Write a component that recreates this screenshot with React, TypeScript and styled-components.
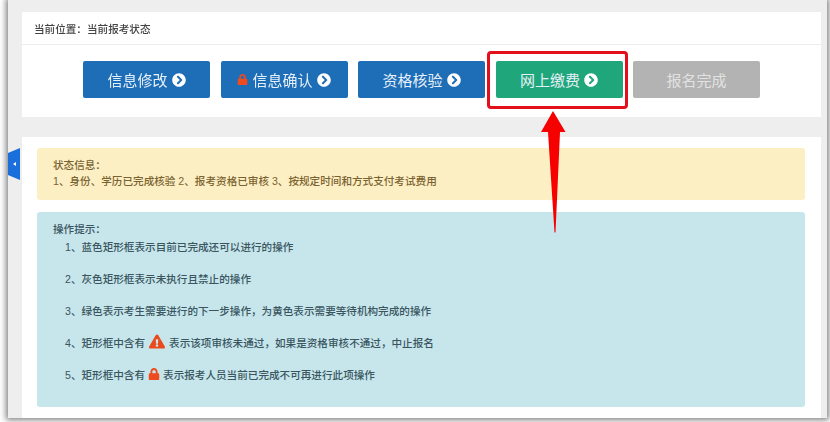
import React from "react";
import styled, { createGlobalStyle } from "styled-components";
import { FaChevronCircleRight, FaExclamationTriangle, FaLock } from "react-icons/fa";

const Global = createGlobalStyle`
  html, body { margin: 0; padding: 0; background: #fff; }
  body { width: 830px; height: 422px; overflow: hidden; font-family: "Liberation Sans", "Noto Sans CJK SC", sans-serif; }
`;

const Desktop = styled.div`
  width: 830px;
  height: 422px;
  overflow: hidden;
  background: #fff;
`;

const Frame = styled.div`
  position: relative;
  box-sizing: border-box;
  width: 819px;
  height: 418px;
  margin-left: 8px;
  padding: 12px 6px 0 14px;
  background: #eeeeee;
  box-shadow: 0 0 6px 2px rgba(0, 0, 0, 0.5);
  filter: blur(0.3px);
`;

const Panel = styled.section`
  background: #fff;
  width: 799px;
`;

const Crumb = styled.div`
  box-sizing: border-box;
  height: 33px;
  padding-left: 12px;
  display: flex;
  align-items: center;
  font-size: 10.6px;
  font-weight: 500;
  color: #444;
  border-bottom: 1px solid #eee;
`;

const Steps = styled.div`
  display: flex;
  gap: 10.5px;
  padding: 16px 0 19px 61px;
`;

const StepButton = styled.div<{ $tone: "blue" | "green" | "gray" }>`
  width: 127px;
  height: 37px;
  border-radius: 2px;
  display: flex;
  align-items: center;
  justify-content: center;
  gap: 4px;
  font-size: 15px;
  color: ${(p) => (p.$tone === "gray" ? "#e2e2e2" : "#e6f0f8")};
  background: ${(p) => (p.$tone === "blue" ? "#1e6db7" : p.$tone === "green" ? "#1fa67b" : "#b3b3b3")};
  svg { color: #fff; }
`;

const LockMark = styled(FaLock)<{ $size: number; $lift: number; $tuck: number }>`
  && { color: #ee4b1f; }
  width: ${(p) => p.$size}px;
  height: ${(p) => p.$size}px;
  margin: ${(p) => -p.$lift}px ${(p) => -p.$tuck}px 0 ${(p) => -p.$tuck}px;
  flex: none;
`;

const MainPanel = styled(Panel)`
  box-sizing: border-box;
  margin-top: 20px;
  height: 281px;
  padding: 11px 16px 11px 15px;
  display: flex;
  flex-direction: column;
  gap: 12px;
`;

const Notice = styled.div`
  box-sizing: border-box;
  height: 52px;
  padding: 9px 16px;
  background: #fcefc4;
  border-radius: 3px;
  color: #7a6330;
  font-size: 10.6px;
  font-weight: 500;
  line-height: 16px;
`;

const Tips = styled.div`
  box-sizing: border-box;
  height: 195px;
  padding: 9px 16px;
  background: #c6e6ec;
  border-radius: 3px;
  color: #3a555e;
  font-size: 10.6px;
  font-weight: 500;
  line-height: 16px;
`;

const TipList = styled.div`
  display: flex;
  flex-direction: column;
  gap: 16px;
  padding: 2px 0 0 12px;
`;

const Tip = styled.div`
  display: flex;
  align-items: center;
  gap: 4px;
  height: 16px;
`;

const WarnMark = styled(FaExclamationTriangle)`
  width: 16px;
  height: 15px;
  margin-top: -3px;
  color: #ea4a1c;
  flex: none;
`;

const Highlight = styled.div`
  position: absolute;
  left: 479px;
  top: 51px;
  width: 141px;
  height: 58px;
  box-sizing: border-box;
  border: 3px solid #e3101c;
  border-radius: 4px;
`;

const ArrowMark = styled.svg`
  position: absolute;
  left: 533px;
  top: 110px;
  width: 26px;
  height: 124px;
`;

const SideTab = styled.div`
  position: absolute;
  left: 0;
  top: 148px;
  width: 12px;
  height: 32px;
  background: #1a6fdc;
  clip-path: polygon(0 16%, 100% 0, 100% 100%, 0 84%);
  border-radius: 3px 0 0 3px;
  display: flex;
  align-items: center;
  justify-content: center;
  &::before {
    content: "";
    border-style: solid;
    border-width: 2.5px 3px 2.5px 0;
    border-color: transparent #fff transparent transparent;
  }
`;

const COLON = "\uFF1A";
const COMMA = "\uFF0C";

const steps: { label: string; tone: "blue" | "green" | "gray"; lock?: boolean; arrow: boolean }[] = [
  { label: "信息修改", tone: "blue", arrow: true },
  { label: "信息确认", tone: "blue", lock: true, arrow: true },
  { label: "资格核验", tone: "blue", arrow: true },
  { label: "网上缴费", tone: "green", arrow: true },
  { label: "报名完成", tone: "gray", arrow: false },
];

export default function App() {
  return (
    <Desktop>
      <Global />
      <Frame>
        <Panel>
          <Crumb>{`当前位置${COLON}当前报考状态`}</Crumb>
          <Steps>
            {steps.map((s) => (
              <StepButton key={s.label} $tone={s.tone}>
                {s.lock && <LockMark $size={11} $lift={0} $tuck={0} />}
                {s.label}
                {s.arrow && <FaChevronCircleRight size={14} />}
              </StepButton>
            ))}
          </Steps>
        </Panel>
        <MainPanel>
          <Notice>
            {`状态信息${COLON}`}
            <br />
            1、身份、学历已完成核验 2、报考资格已审核 3、按规定时间和方式支付考试费用
          </Notice>
          <Tips>
            {`操作提示${COLON}`}
            <TipList>
              <Tip>1、蓝色矩形框表示目前已完成还可以进行的操作</Tip>
              <Tip>2、灰色矩形框表示未执行且禁止的操作</Tip>
              <Tip>{`3、绿色表示考生需要进行的下一步操作${COMMA}为黄色表示需要等待机构完成的操作`}</Tip>
              <Tip>
                4、矩形框中含有 <WarnMark /> {`表示该项审核未通过${COMMA}如果是资格审核不通过${COMMA}中止报名`}
              </Tip>
              <Tip>
                5、矩形框中含有 <LockMark $size={12} $lift={3} $tuck={1} /> 表示报考人员当前已完成不可再进行此项操作
              </Tip>
            </TipList>
          </Tips>
        </MainPanel>
        <SideTab />
        <Highlight />
        <ArrowMark viewBox="0 0 26 124">
          <path d="M12 1 L24.5 22 L19 22 L14.5 122.5 L13.5 122.5 L7 22 L0 22 Z" fill="#f60000" />
        </ArrowMark>
      </Frame>
    </Desktop>
  );
}
